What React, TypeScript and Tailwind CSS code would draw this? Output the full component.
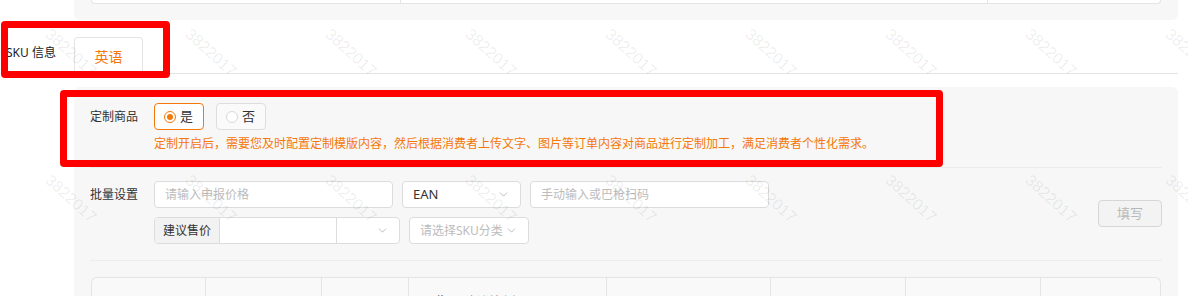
import { ChevronDown } from "lucide-react";
import type { ReactNode } from "react";

const line = "border-[#e4e4e4]";

// faint "3822017" watermark lattice drawn over the page
const marks: { x: number; y: number }[] = [];
for (let r = 0; r < 2; r++) {
  for (let c = 0; c < 9; c++) {
    marks.push({ x: 53 + c * 140, y: 26 + r * 146 });
  }
}

function Box({
  width,
  children,
  className = "",
}: {
  width: string;
  children?: ReactNode;
  className?: string;
}) {
  return (
    <div
      className={`flex h-[27px] items-center rounded-[4px] border border-[#dcdcdc] bg-white px-[10px] text-[12px] ${width} ${className}`}
    >
      {children}
    </div>
  );
}

function Chevron() {
  return <ChevronDown size={13} strokeWidth={1.4} className="ml-auto text-[#a8a8a8]" />;
}

export default function App() {
  return (
    <div className="relative h-[296px] w-[1188px] overflow-hidden bg-white font-['Noto_Sans','Noto_Sans_CJK_SC',sans-serif] text-[#333]">
      {/* tail of the previous panel */}
      <div className="ml-[74px] h-[20px] w-[1104px] rounded-b-[6px] bg-[#f7f7f7] px-[17px]">
        <div className={`flex h-[4px] rounded-b-[6px] border-x border-b bg-white ${line}`}>
          <div className={`w-[309px] border-r ${line}`} />
          <div className={`w-[587px] border-r ${line}`} />
          <div className="flex-1" />
        </div>
      </div>

      {/* SKU info + language tabs */}
      <div className="flex h-[54px] items-end">
        <span className="mb-[13px] w-[74px] pl-[6px] text-[12px] leading-[17px] text-[#222]">SKU 信息</span>
        <div className={`mr-[10px] flex h-[37px] flex-1 border-b ${line}`}>
          <div
            className={`flex h-[37px] w-[69px] items-center justify-center rounded-t-[4px] border border-b-0 bg-white text-[14px] text-[#f5780a] ${line}`}
          >
            英语
          </div>
        </div>
      </div>

      {/* main panel */}
      <div className="ml-[74px] mt-[13px] h-[260px] w-[1104px] rounded-t-[6px] bg-[#f7f7f7] px-[16px] pt-[16px]">
        <div className="flex">
          <span className="w-[64px] text-[12px] leading-[27px]">定制商品</span>
          <div className="flex flex-col">
            <div className="flex gap-[12px]">
              <div className="flex h-[27px] w-[50px] items-center gap-[4px] rounded-[4px] border border-[#f5780a] bg-white pl-[9px] text-[13px]">
                <span className="flex size-[12px] items-center justify-center rounded-full border border-[#f5780a] bg-white">
                  <span className="size-[6px] rounded-full bg-[#f5780a]" />
                </span>
                是
              </div>
              <div className="flex h-[27px] w-[50px] items-center gap-[4px] rounded-[4px] border border-[#dedede] bg-[#fafafa] pl-[9px] text-[13px]">
                <span className="size-[12px] rounded-full border border-[#d9d9d9] bg-white" />
                否
              </div>
            </div>
            <p className="mt-[6px] text-[12px] leading-[16px] text-[#f5780a]">
              定制开启后，需要您及时配置定制模版内容，然后根据消费者上传文字、图片等订单内容对商品进行定制加工，满足消费者个性化需求。
            </p>
          </div>
        </div>

        <div className="mt-[15px] h-px bg-[#ececec]" />

        <div className="mt-[13px] flex items-center">
          <span className="w-[64px] self-start text-[12px] leading-[27px]">批量设置</span>
          <div className="flex flex-col gap-[9px]">
            <div className="flex gap-[9px]">
              <Box width="w-[239px]" className="text-[#bcbcbc]">请输入申报价格</Box>
              <Box width="w-[119px]" className="text-[13px]">
                EAN
                <Chevron />
              </Box>
              <Box width="w-[239px]" className="text-[#bcbcbc]">手动输入或巴枪扫码</Box>
            </div>
            <div className="flex gap-[9px]">
              <div className="flex h-[27px] w-[246px] overflow-hidden rounded-[4px] border border-[#dcdcdc] bg-white text-[12px]">
                <div className="flex w-[65px] items-center justify-center border-r border-[#dcdcdc] bg-[#f2f2f2]">
                  建议售价
                </div>
                <div className="flex-1 border-r border-[#dcdcdc]" />
                <div className="flex w-[62px] items-center pr-[10px]">
                  <Chevron />
                </div>
              </div>
              <Box width="w-[120px]" className="text-[#bcbcbc]">
                请选择SKU分类
                <Chevron />
              </Box>
            </div>
          </div>
          <div className="flex-1" />
          <button
            type="button"
            className="mt-[2px] h-[27px] w-[64px] rounded-[4px] border border-[#d6d6d6] bg-[#f3f3f3] text-[13px] text-[#b8b8b8]"
          >
            填写
          </button>
        </div>

        <div className="mt-[16px] h-px bg-[#ececec]" />

        <div className={`ml-[1px] mt-[16px] flex h-[40px] w-[1070px] rounded-t-[6px] border border-b-0 bg-[#f9f9f9] ${line}`}>
          <div className={`w-[114px] border-r ${line}`} />
          <div className={`w-[116px] border-r ${line}`} />
          <div className={`w-[87px] border-r ${line}`} />
          <div className={`w-[198px] border-r pl-[12px] pt-[14px] text-[13px] leading-[18px] ${line}`}>
            预览图 <span className="text-[#999]">建议比例 1:1</span>
          </div>
          <div className={`w-[164px] border-r ${line}`} />
          <div className={`w-[135px] border-r ${line}`} />
          <div className={`w-[135px] border-r ${line}`} />
          <div className="flex-1" />
        </div>
      </div>

      {/* watermark */}
      <div className="pointer-events-none absolute inset-0">
        {marks.map((m, i) => (
          <span
            key={i}
            className="absolute origin-top-left rotate-[42deg] font-['Liberation_Sans',sans-serif] text-[16px] font-light leading-none text-black/[0.08]"
            style={{ left: m.x, top: m.y }}
          >
            3822017
          </span>
        ))}
      </div>

      {/* red annotation frames */}
      <div className="pointer-events-none absolute left-[1px] top-[21px] h-[57px] w-[169px] rounded-[4px] border-[7px] border-[#ff0000]" />
      <div className="pointer-events-none absolute left-[60px] top-[90px] h-[77px] w-[883px] rounded-[4px] border-[7px] border-[#ff0000]" />
    </div>
  );
}
